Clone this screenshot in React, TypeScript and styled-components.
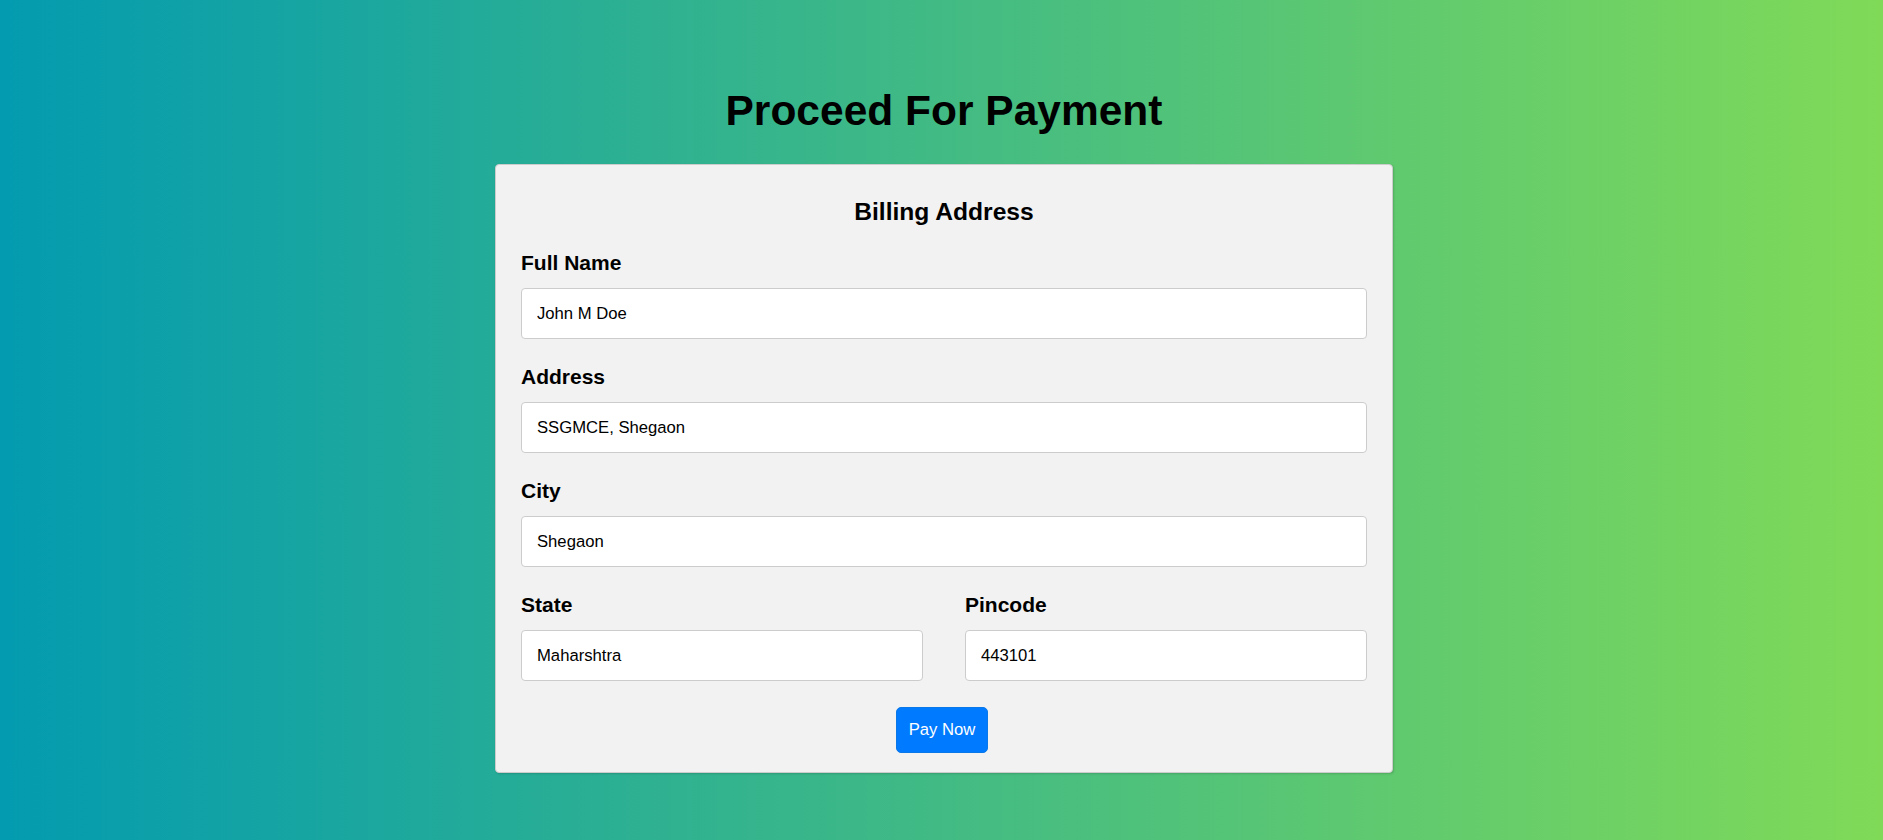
import styled, { createGlobalStyle } from 'styled-components'

const GlobalStyle = createGlobalStyle`
  html, body { margin: 0; padding: 0; }
  body { font-family: "Liberation Sans", Arial, sans-serif; }
  * { box-sizing: border-box; }
`

const Page = styled.div`
  min-height: 100vh;
  padding: 86px 0 40px 5px;
  background: linear-gradient(to right, #039bb0, #80da58);
`
const Title = styled.h1`
  margin: 0 0 29px;
  text-align: center;
  font-size: 42.5px;
  line-height: 49px;
  font-weight: 700;
  color: #000;
`
const Card = styled.form`
  width: 898px;
  margin: 0 auto;
  padding: 25px 25px 19px;
  background: #f2f2f2;
  border: 1px solid #ccc;
  border-radius: 4px;
  box-shadow: 1px 1px 2px rgba(0, 0, 0, 0.15);
`
const CardTitle = styled.h3`
  margin: 8px 0 26px;
  text-align: center;
  font-size: 24.6px;
  line-height: 27px;
  font-weight: 700;
  color: #000;
`
const Field = styled.div`
  display: flex;
  flex-direction: column;
  margin-bottom: 26px;
`
const Label = styled.label`
  font-size: 21px;
  line-height: 23px;
  font-weight: 700;
  color: #000;
  margin-bottom: 14px;
`
const Input = styled.input`
  width: 100%;
  height: 51px;
  padding: 15px;
  font-family: "Liberation Sans", Arial, sans-serif;
  font-size: 16.67px;
  color: #000;
  background: #fff;
  border: 1px solid #ccc;
  border-radius: 4px;
  outline: none;
`
const Row = styled.div`
  display: grid;
  grid-template-columns: 1fr 1fr;
  column-gap: 42px;
`
const Actions = styled.div`
  display: flex;
  justify-content: center;
  padding-right: 4px;
`
const PayButton = styled.button`
  height: 46px;
  padding: 0 12px;
  font-family: "Liberation Sans", Arial, sans-serif;
  font-size: 16.67px;
  color: #fff;
  background: #007bff;
  border: 1px solid #0a78e8;
  border-radius: 5px;
  cursor: pointer;
`

const fields = [
  { id: 'fname', label: 'Full Name', value: 'John M Doe' },
  { id: 'adr', label: 'Address', value: 'SSGMCE, Shegaon' },
  { id: 'city', label: 'City', value: 'Shegaon' },
]

export default function App() {
  return (
    <>
      <GlobalStyle />
      <Page>
        <Title>Proceed For Payment</Title>
        <Card onSubmit={e => e.preventDefault()}>
          <CardTitle>Billing Address</CardTitle>
          {fields.map(f => (
            <Field key={f.id}>
              <Label htmlFor={f.id}>{f.label}</Label>
              <Input id={f.id} defaultValue={f.value} />
            </Field>
          ))}
          <Row>
            <Field>
              <Label htmlFor="state">State</Label>
              <Input id="state" defaultValue="Maharshtra" />
            </Field>
            <Field>
              <Label htmlFor="zip">Pincode</Label>
              <Input id="zip" defaultValue="443101" />
            </Field>
          </Row>
          <Actions>
            <PayButton type="submit">Pay Now</PayButton>
          </Actions>
        </Card>
      </Page>
    </>
  )
}
